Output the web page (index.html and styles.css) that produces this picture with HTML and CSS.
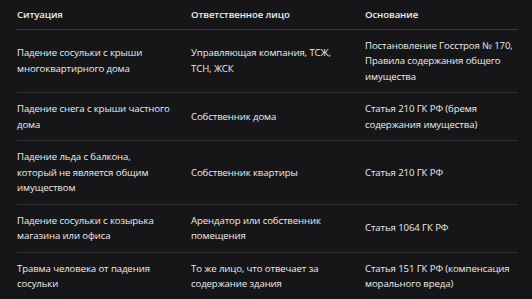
FILE: index.html
```html
<!DOCTYPE html>
<html lang="ru">
<head>
<meta charset="utf-8">
<link rel="stylesheet" href="styles.css">
</head>
<body>
<table class="liability">
  <colgroup>
    <col class="c1"><col class="c2"><col class="c3">
  </colgroup>
  <thead>
    <tr><th>Ситуация</th><th>Ответственное лицо</th><th>Основание</th></tr>
  </thead>
  <tbody>
    <tr><td>Падение сосульки с крыши многоквартирного дома</td><td>Управляющая компания, ТСЖ, ТСН, ЖСК</td><td>Постановление Госстроя № 170, Правила содержания общего имущества</td></tr>
    <tr><td>Падение снега с крыши частного дома</td><td>Собственник дома</td><td>Статья 210 ГК РФ (бремя содержания имущества)</td></tr>
    <tr><td>Падение льда с балкона, который не является общим имуществом</td><td>Собственник квартиры</td><td>Статья 210 ГК РФ</td></tr>
    <tr><td>Падение сосульки с козырька магазина или офиса</td><td>Арендатор или собственник помещения</td><td>Статья 1064 ГК РФ</td></tr>
    <tr><td>Травма человека от падения сосульки</td><td>То же лицо, что отвечает за содержание здания</td><td>Статья 151 ГК РФ (компенсация морального вреда)</td></tr>
  </tbody>
</table>
</body>
</html>
```
FILE: styles.css
```css
html, body {
  margin: 0;
  padding: 0;
  background: #161618;
}
body {
  padding: 0 14px 0 17px;
  font-family: "Open Sans", "Noto Sans", sans-serif;
  font-size: 9.6px;
  letter-spacing: -0.1px;
  color: #ececec;
}
.liability {
  width: 501px;
  border-collapse: collapse;
  table-layout: fixed;
}
.c1, .c2 { width: 174px; }
.c3 { width: 153px; }
.liability th {
  text-align: left;
  font-weight: 600;
  padding: 7px 8px 6px 0;
  line-height: 15.5px;
  border-bottom: 1px solid #3a3a3c;
}
.liability td {
  padding: 8px 8px 8px 0;
  line-height: 15.5px;
  vertical-align: middle;
  border-bottom: 1px solid #2e2e30;
}
.liability td:nth-child(1) { padding-right: 20px; }
.liability td:nth-child(2) { padding-right: 12px; }
.liability td:last-child, .liability th:last-child {
  padding-right: 0;
}
```
